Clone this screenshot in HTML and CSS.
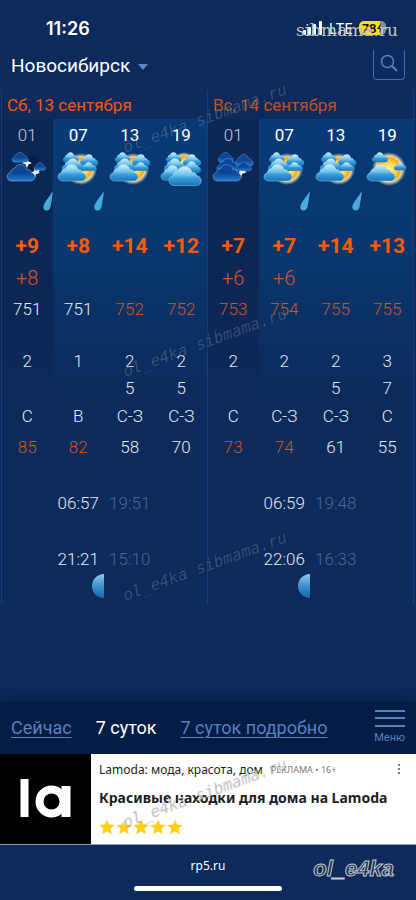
FILE: index.html
```
<!DOCTYPE html>
<html lang="ru">
<head>
<meta charset="utf-8">
<meta name="viewport" content="width=device-width, initial-scale=1">
<title>Новосибирск</title>
<link rel="stylesheet" href="styles.css">
</head>
<body>
<svg class="defs" aria-hidden="true">
  <defs>
    <linearGradient id="dayFill" x1="0" y1="0" x2="0" y2="1">
      <stop offset="0" stop-color="#d6f1fc"/><stop offset=".45" stop-color="#6dc0ea"/><stop offset=".6" stop-color="#3a9edb"/><stop offset="1" stop-color="#1573bb"/>
    </linearGradient>
    <linearGradient id="nightFill" x1="0" y1="0" x2="0" y2="1">
      <stop offset="0" stop-color="#11479a"/><stop offset=".5" stop-color="#0b4498"/><stop offset="1" stop-color="#1d7cc6"/>
    </linearGradient>
    <radialGradient id="sunFill">
      <stop offset="0" stop-color="#fff08a"/><stop offset=".45" stop-color="#ffd44a"/><stop offset=".66" stop-color="#f9a51b"/><stop offset=".76" stop-color="#e9d9a8"/><stop offset="1" stop-color="#d8d8b0" stop-opacity="0"/>
    </radialGradient>
    <linearGradient id="moonFill" x1="0" y1="0" x2="0" y2="1">
      <stop offset="0" stop-color="#8cc8ea"/><stop offset=".5" stop-color="#3d92cc"/><stop offset="1" stop-color="#1768ac"/>
    </linearGradient>
    <path id="cloud" d="M5 17C2 17 0 15.300 0 12.800C0 10.600 1.600 8.900 3.700 8.600C3.400 6.400 5 4.600 7.300 4.800C8.500 2 10.700.500 13.500.500C17 .500 19.500 2.700 20 5.700C22 5.100 24 6.500 24.200 8.500C26.500 8.900 28 10.500 28 12.700C28 15.300 26.200 17 23.500 17Z"/>
    <symbol id="cloudy" viewBox="0 0 42 38">
      <circle cx="24" cy="18" r="16" fill="url(#sunFill)"/>
      <g fill="url(#dayFill)">
        <use href="#cloud" transform="translate(6 1) scale(.55 .6)"/>
        <use href="#cloud" transform="translate(23 3) scale(.65 .7)"/>
        <use href="#cloud" transform="translate(5 7) scale(.8)"/>
        <use href="#cloud" transform="translate(24 11) scale(.56 .52)"/>
        <use href="#cloud" transform="translate(1 13)" stroke="#b9e3f6" stroke-width=".4"/>
      </g>
    </symbol>
    <symbol id="overcast" viewBox="0 0 42 38">
      <circle cx="24" cy="14" r="13" fill="url(#sunFill)"/>
      <g fill="url(#dayFill)">
        <use href="#cloud" transform="translate(6 1) scale(.55 .6)"/>
        <use href="#cloud" transform="translate(23 3) scale(.65 .7)"/>
        <use href="#cloud" transform="translate(4 7) scale(.8)"/>
        <use href="#cloud" transform="translate(23 10) scale(.64 .7)"/>
        <use href="#cloud" transform="translate(1 14) scale(.85 .9)" stroke="#b9e3f6" stroke-width=".4"/>
        <use href="#cloud" transform="translate(9 15) scale(1.150)" stroke="#b9e3f6" stroke-width=".4"/>
      </g>
    </symbol>
    <symbol id="sunny" viewBox="0 0 42 38">
      <circle cx="23" cy="18" r="17" fill="url(#sunFill)"/>
      <g fill="url(#dayFill)">
        <use href="#cloud" transform="translate(6 1) scale(.57 .6)"/>
        <use href="#cloud" transform="translate(28 11) scale(.44 .48)"/>
        <use href="#cloud" transform="translate(1 13)" stroke="#b9e3f6" stroke-width=".4"/>
      </g>
    </symbol>
    <symbol id="night" viewBox="0 0 42 38">
      <circle cx="26" cy="14" r="9" fill="#071c47"/>
      <path d="M25 22C30 21 33 18 34 13C35 20 33 24 25 24Z" fill="#dcecf8"/>
      <path d="M21 7L22.500 10.500L26 12L22.500 13.500L21 17L19.500 13.500L16 12L19.500 10.500Z" fill="#eaf4fb"/>
      <path d="M29 16L30 20L34 22L30 23L29 27L27 23L25 22L28 20Z" fill="#eaf4fb"/>
      <g fill="url(#nightFill)" stroke="#9fc4e6" stroke-width=".5">
        <use href="#cloud" transform="translate(6 1) scale(.58 .6)"/>
        <use href="#cloud" transform="translate(28 11) scale(.42 .48)"/>
        <use href="#cloud" transform="translate(1 13)"/>
      </g>
    </symbol>
    <symbol id="nightcloudy" viewBox="0 0 42 38">
      <path d="M29 14L30 19L35 21L30 23L29 27L27 22Z" fill="#eaf4fb"/>
      <g fill="url(#nightFill)" stroke="#82addb" stroke-width=".5">
        <use href="#cloud" transform="translate(6 1) scale(.55 .6)"/>
        <use href="#cloud" transform="translate(23 3) scale(.65 .7)"/>
        <use href="#cloud" transform="translate(5 7) scale(.8)"/>
        <use href="#cloud" transform="translate(24 11) scale(.56 .52)"/>
        <use href="#cloud" transform="translate(1 13)"/>
      </g>
    </symbol>
    <symbol id="drop" viewBox="0 0 10 20">
      <path d="M9.800 0C8 4 2 10 .600 14.500C-.300 17.500 1 19.500 3.500 19.500C6 19.500 7.300 17.500 7.800 14.500C8.500 10 9.500 5 9.800 0Z" fill="#48abdc"/>
    </symbol>
    <symbol id="moon" viewBox="0 0 12 24">
      <path d="M12 0A12 12 0 0 0 12 24Z" fill="url(#moonFill)"/>
    </symbol>
    <symbol id="star" viewBox="0 0 16 16">
      <path d="M8 .500L10.200 5.600L15.700 6.100L11.500 9.700L12.800 15.200L8 12.300L3.200 15.200L4.500 9.700L.300 6.100L5.800 5.600Z" fill="#ffcf1a"/>
    </symbol>
  </defs>
</svg>

<div class="screen">
  <div class="status">
    <time class="clock">11:26</time>
    <div class="signals">
      <svg class="bars" viewBox="0 0 20 14" aria-hidden="true"><g fill="#fff"><rect x="0" y="9" width="3" height="5" rx="1"/><rect x="5" y="6" width="3" height="8" rx="1"/><rect x="10" y="3" width="3" height="11" rx="1"/><rect x="16" y="0" width="3" height="14" rx="1"/></g></svg>
      <span class="lte">LTE</span>
      <span class="battery">78<svg class="bolt" viewBox="0 0 6 10" aria-hidden="true"><path d="M4 0L0 6H3L2 10L6 4H3Z" fill="#151515"/></svg></span>
    </div>
    <span class="site-mark">sibmama.ru</span>
  </div>

  <header class="top">
    <button class="city" type="button">Новосибирск<span class="caret"></span></button>
    <button class="search" type="button" aria-label="Поиск">
      <svg viewBox="0 0 18 18" aria-hidden="true"><circle cx="7.500" cy="7.500" r="6" fill="none" stroke="#5f80bc" stroke-width="1.500"/><path d="M12 12L17 17" stroke="#5f80bc" stroke-width="2"/></svg>
    </button>
  </header>

  <main class="forecast">
    <table>
      <colgroup>
        <col class="night"><col class="day"><col class="day"><col class="day">
        <col class="night"><col class="day"><col class="day"><col class="day">
      </colgroup>
      <thead>
        <tr class="date"><th colspan="4">Сб, 13 сентября</th><th class="sunday" colspan="4">Вс, 14 сентября</th></tr>
        <tr class="hour"><th class="late">01</th><th>07</th><th>13</th><th>19</th><th class="late">01</th><th>07</th><th>13</th><th>19</th></tr>
      </thead>
      <tbody>
        <tr class="sky">
          <td><svg><use href="#night"/></svg></td><td><svg><use href="#cloudy"/></svg></td><td><svg><use href="#cloudy"/></svg></td><td><svg><use href="#overcast"/></svg></td>
          <td><svg><use href="#nightcloudy"/></svg></td><td><svg><use href="#cloudy"/></svg></td><td><svg><use href="#cloudy"/></svg></td><td><svg><use href="#sunny"/></svg></td>
        </tr>
        <tr class="rain">
          <td><svg><use href="#drop"/></svg></td><td><svg><use href="#drop"/></svg></td><td></td><td></td>
          <td></td><td><svg><use href="#drop"/></svg></td><td><svg><use href="#drop"/></svg></td><td></td>
        </tr>
        <tr class="temp"><td>+9</td><td>+8</td><td>+14</td><td>+12</td><td>+7</td><td>+7</td><td>+14</td><td>+13</td></tr>
        <tr class="feels"><td>+8</td><td></td><td></td><td></td><td>+6</td><td>+6</td><td></td><td></td></tr>
        <tr class="pressure"><td>751</td><td>751</td><td class="warm">752</td><td class="warm">752</td><td class="warm">753</td><td class="warm">754</td><td class="warm">755</td><td class="warm">755</td></tr>
        <tr class="wind"><td>2</td><td>1</td><td>2</td><td>2</td><td>2</td><td>2</td><td>2</td><td>3</td></tr>
        <tr class="gust"><td></td><td></td><td>5</td><td>5</td><td></td><td></td><td>5</td><td>7</td></tr>
        <tr class="gust"><td>С</td><td>В</td><td>С-З</td><td>С-З</td><td>С</td><td>С-З</td><td>С-З</td><td>С</td></tr>
        <tr class="humidity"><td class="warm">85</td><td class="warm">82</td><td>58</td><td>70</td><td class="warm">73</td><td class="warm">74</td><td>61</td><td>55</td></tr>
        <tr class="rise"><td></td><td>06:57</td><td class="dim">19:51</td><td></td><td></td><td>06:59</td><td class="dim">19:48</td><td></td></tr>
        <tr class="rise"><td></td><td>21:21</td><td class="dim">15:10</td><td></td><td></td><td>22:06</td><td class="dim">16:33</td><td></td></tr>
        <tr class="phase"><td></td><td><svg><use href="#moon"/></svg></td><td></td><td></td><td></td><td><svg><use href="#moon"/></svg></td><td></td><td></td></tr>
      </tbody>
    </table>
    <span class="stamp stamp-a">ol_e4ka sibmama.ru</span>
    <span class="stamp stamp-b">ol_e4ka sibmama.ru</span>
    <span class="stamp stamp-c">ol_e4ka sibmama.ru</span>
  </main>

  <nav class="tabs">
    <a href="#now">Сейчас</a>
    <span class="current">7 суток</span>
    <a href="#detail">7 суток подробно</a>
    <button class="menu" type="button"><span class="lines"></span>Меню</button>
  </nav>

  <section class="ad">
    <svg class="brand" viewBox="0 0 90 90" role="img" aria-label="Lamoda"><rect width="90" height="90" fill="#000"/><rect x="20" y="25" width="8" height="38" fill="#fff"/><ellipse cx="51" cy="47.500" rx="12" ry="12" fill="none" stroke="#fff" stroke-width="8"/><rect x="61" y="32" width="9" height="31" fill="#fff"/></svg>
    <div class="ad-body">
      <div class="ad-head"><span class="ad-name">Lamoda: мода, красота, дом</span><span class="ad-note">РЕКЛАМА • 16+</span></div>
      <a class="ad-title" href="#lamoda">Красивые находки для дома на Lamoda</a>
      <div class="stars"><svg><use href="#star"/></svg><svg><use href="#star"/></svg><svg><use href="#star"/></svg><svg><use href="#star"/></svg><svg><use href="#star"/></svg></div>
    </div>
    <button class="more" type="button" aria-label="Ещё"><i></i><i></i><i></i></button>
    <span class="stamp stamp-d">ol_e4ka sibmama.ru</span>
  </section>

  <footer class="bottom">
    <span class="host">rp5.ru</span>
    <span class="home"></span>
    <span class="author">ol_e4ka</span>
  </footer>
</div>
</body>
</html>
```
FILE: styles.css
```
* { box-sizing: border-box; }
body {
  margin: 0;
  background: #0c2a5b;
  color: #fff;
  font-family: Roboto, "Liberation Sans", sans-serif;
}
button { margin: 0; padding: 0; border: 0; background: none; color: inherit; font: inherit; }
.defs { position: absolute; width: 0; height: 0; }
.screen { display: flex; flex-direction: column; min-height: 100vh; overflow: hidden; }

.status {
  position: relative;
  display: flex;
  justify-content: space-between;
  align-items: center;
  height: 50px;
  padding: 6px 30px 0 46px;
  font-family: Inter, sans-serif;
}
.clock { font-size: 18px; font-weight: 600; }
.signals { display: flex; align-items: center; gap: 6px; }
.bars { width: 20px; height: 14px; }
.lte { font-size: 14px; }
.battery {
  display: flex;
  align-items: center;
  width: 27px;
  height: 14px;
  padding-left: 3px;
  border-radius: 5px;
  background: linear-gradient(90deg, #ffdd16 78%, #8490a8 78%);
  color: #151515;
  font-size: 12px;
  font-weight: 700;
}
.bolt { width: 6px; height: 10px; }
.site-mark {
  position: absolute;
  right: 18px;
  top: 20px;
  color: #c4c4c4;
  font: 17px/20px "DejaVu Serif", serif;
}

.top { display: flex; justify-content: space-between; height: 40px; padding: 0 11px; }
.city { display: flex; align-items: center; gap: 8px; height: 30px; font-size: 19px; }
.caret { border: 5px solid transparent; border-top: 6px solid #5f86c4; border-bottom: 0; margin-top: 3px; }
.search {
  display: grid;
  place-items: center;
  width: 32px;
  height: 30px;
  border: 1px solid #4a69a6;
  border-top: 0;
  border-radius: 0 0 4px 4px;
}
.search svg { width: 18px; height: 18px; margin-bottom: 3px; }

.forecast { position: relative; flex: 1; padding: 0 2px 0 1px; }
table {
  width: 100%;
  table-layout: fixed;
  border-collapse: separate;
  border-spacing: 0;
  border-right: 1px solid #1a3c73;
  color: #e4e9f2;
  font-size: 17px;
  font-weight: 300;
}
.day { background: linear-gradient(transparent 29px, #073a77 29px, #08386f 150px, #0c2a5b 310px); }
.night { background: linear-gradient(#0c2a5b 29px, #0c2656 29px, #0c2656 220px, #0c2a5b 310px); }
th, td { padding: 0; text-align: center; vertical-align: middle; }
th:first-child, td:first-child, td:nth-child(5), .hour th:nth-child(5), .sunday { border-left: 1px solid #1a3c73; }
.date th { height: 29px; padding-left: 5px; color: #f5570c; text-align: left; font-weight: 400; }
.date .sunday { color: #c4501c; }
.hour th { height: 32px; color: #fff; font-weight: 400; }
.hour .late { color: #c3cbdc; font-weight: 300; }
.sky td { height: 38px; line-height: 0; }
.sky svg { width: 42px; height: 38px; }
.rain td { height: 41px; padding-top: 2px; text-align: right; vertical-align: top; line-height: 0; }
.rain svg { width: 10px; height: 20px; }
.temp td { height: 32px; color: #ff5a05; font-size: 21px; font-weight: 700; }
.feels td { height: 32px; color: #d9561c; font-size: 20px; }
.pressure td { height: 30px; }
.pressure .warm, .humidity .warm { color: #d0561f; }
.wind td { height: 50px; padding-top: 23px; }
.gust td { height: 28px; }
.humidity td { height: 32px; padding-top: 2px; }
.rise td { height: 56px; padding-top: 26px; }
.rise .dim { color: #4b6799; }
.phase td { height: 30px; text-align: right; vertical-align: top; line-height: 0; }
.phase svg { width: 12px; height: 24px; }

.stamp {
  position: absolute;
  left: 117px;
  color: transparent;
  font: italic 16px/20px "DejaVu Sans Mono", monospace;
  text-shadow: 1px 1px 0 rgba(180, 190, 205, .26), 0 0 0 rgba(10, 30, 70, .3);
  transform: rotate(-20deg);
  pointer-events: none;
}
.stamp-a { top: 18px; }
.stamp-b { top: 242px; }
.stamp-c { top: 466px; }
.stamp-d { top: 29px; text-shadow: 1px 1px 1px rgba(90, 90, 90, .4), 0 0 0 rgba(255, 255, 255, .8); }

.tabs {
  display: flex;
  align-items: center;
  gap: 24px;
  height: 53px;
  padding: 0 11px;
  background: #031d44;
  box-shadow: 0 -4px 14px rgba(4, 24, 60, .35);
  color: #5d7fbe;
  font-size: 18px;
}
.tabs a { color: inherit; text-decoration-thickness: 1px; text-underline-offset: 3px; }
.current { color: #fff; }
.menu { display: grid; justify-items: center; gap: 4px; margin-left: auto; font-size: 11px; line-height: 14px; }
.lines { width: 30px; height: 17px; background: linear-gradient(#5d7fbe 2px, transparent 2px 7px, #5d7fbe 7px 9px, transparent 9px 15px, #5d7fbe 15px); }

.ad {
  position: relative;
  display: flex;
  height: 91px;
  border-bottom: 1px solid #8c98ad;
  background: #fff;
  color: #1d1d1f;
  font-family: "Noto Sans", sans-serif;
}
.brand { flex: none; width: 91px; height: 90px; background: #000; }
.ad-body { display: flex; flex: 1; flex-direction: column; padding: 5px 0 0 8px; white-space: nowrap; }
.ad-head { display: flex; align-items: center; gap: 8px; height: 20px; }
.ad-name { font-size: 12px; }
.ad-note { color: #77787c; font-size: 9px; }
.ad-title { margin-top: 8px; color: inherit; font-size: 14px; font-weight: 700; line-height: 22px; text-decoration: none; }
.stars { display: flex; gap: 1px; margin-top: 10px; }
.stars svg { width: 16px; height: 16px; }
.more { display: grid; align-content: start; gap: 2px; width: 18px; padding-top: 10px; }
.more i { width: 2px; height: 2px; border-radius: 50%; background: #55565a; }

.bottom { position: relative; display: flex; flex-direction: column; align-items: center; justify-content: space-between; height: 55px; padding: 13px 0 9px; }
.host { font: 12px/16px "Noto Sans", sans-serif; }
.home { width: 148px; height: 5px; border-radius: 3px; background: #fff; }
.author {
  position: absolute;
  right: 22px;
  top: 11px;
  color: #17335f;
  font: italic 700 22px/26px "Liberation Sans", sans-serif;
  -webkit-text-stroke: 1px #c8c8c4;
}
```
